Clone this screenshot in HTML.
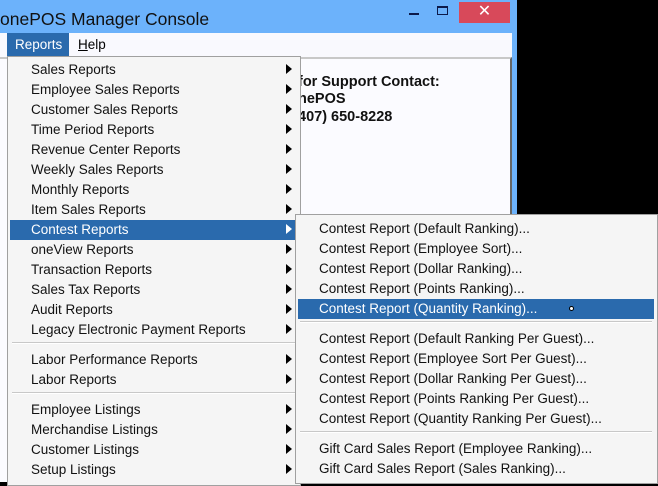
<!DOCTYPE html>
<html><head><style>
*{margin:0;padding:0;box-sizing:border-box}
body{width:658px;height:482px;background:#000;position:relative;overflow:hidden;font-family:"Liberation Sans","DejaVu Sans",sans-serif}
.win{position:absolute;left:0;top:0;width:517px;height:482px;background:#6cb2fb}
.title{position:absolute;left:0;top:9px;font-size:17.5px;color:#111}
.close{position:absolute;left:459px;top:2px;width:51px;height:21px;background:#d8495a;color:#fff;text-align:center;font-size:16px;line-height:20px}
.min{position:absolute;left:409px;top:13px;width:10px;height:2px;background:#0c1a4a}
.max{position:absolute;left:437px;top:6px;width:11px;height:9px;border:1px solid #0c1a4a;border-top-width:2px}
.menubar{position:absolute;left:0;top:33px;width:512px;height:24px;background:#f9f9fe;font-size:13.5px}
.menubar span{position:absolute;top:0;height:23px;line-height:23px}
.client{position:absolute;left:0;top:57px;width:512px;height:425px;background:#fbfbff;border-top:2px solid #c8c8c8;border-right:2px solid #666}
.ct{position:absolute;left:298px;font-weight:bold;font-size:14.5px;color:#111}
.menu{position:absolute;background:#f5f5f5;border:1px solid #a0a0a0;font-size:13.5px;color:#111}
.it{position:absolute;left:2px;height:20px;line-height:19px;white-space:nowrap}
.hl{background:#2a6aad;color:#fff}
.arr{position:absolute;width:0;height:0;border-top:5px solid transparent;border-bottom:5px solid transparent;border-left:6px solid #000;top:4px}
.sep{position:absolute;left:24px;height:2px;border-top:1px solid #c8c8c8;border-bottom:1px solid #fff}
</style></head><body>
<div class="win">
<div class="title">onePOS Manager Console</div>
<div class="min"></div><div class="max"></div>
<div class="close">✕</div>
<div class="menubar">
<span style="left:7px;width:62px;background:#2a6aad;color:#fff;padding-left:8px">Reports</span>
<span style="left:78px"><u>H</u>elp</span>
</div>
<div class="client">
<div class="ct" style="top:15px">for Support Contact:</div>
<div class="ct" style="top:32px">nePOS</div>
<div class="ct" style="top:50px">407) 650-8228</div>
</div>
</div>

<div class="menu" style="left:7px;top:56px;width:294px;height:430px">
<div class="it" style="top:3px;width:288px"><span style="margin-left:21px">Sales Reports</span><i class="arr" style="left:276px"></i></div>
<div class="it" style="top:23px;width:288px"><span style="margin-left:21px">Employee Sales Reports</span><i class="arr" style="left:276px"></i></div>
<div class="it" style="top:43px;width:288px"><span style="margin-left:21px">Customer Sales Reports</span><i class="arr" style="left:276px"></i></div>
<div class="it" style="top:63px;width:288px"><span style="margin-left:21px">Time Period Reports</span><i class="arr" style="left:276px"></i></div>
<div class="it" style="top:83px;width:288px"><span style="margin-left:21px">Revenue Center Reports</span><i class="arr" style="left:276px"></i></div>
<div class="it" style="top:103px;width:288px"><span style="margin-left:21px">Weekly Sales Reports</span><i class="arr" style="left:276px"></i></div>
<div class="it" style="top:123px;width:288px"><span style="margin-left:21px">Monthly Reports</span><i class="arr" style="left:276px"></i></div>
<div class="it" style="top:143px;width:288px"><span style="margin-left:21px">Item Sales Reports</span><i class="arr" style="left:276px"></i></div>
<div class="it hl" style="top:163px;width:288px"><span style="margin-left:21px">Contest Reports</span><i class="arr" style="left:276px;border-left-color:#fff"></i></div>
<div class="it" style="top:183px;width:288px"><span style="margin-left:21px">oneView Reports</span><i class="arr" style="left:276px"></i></div>
<div class="it" style="top:203px;width:288px"><span style="margin-left:21px">Transaction Reports</span><i class="arr" style="left:276px"></i></div>
<div class="it" style="top:223px;width:288px"><span style="margin-left:21px">Sales Tax Reports</span><i class="arr" style="left:276px"></i></div>
<div class="it" style="top:243px;width:288px"><span style="margin-left:21px">Audit Reports</span><i class="arr" style="left:276px"></i></div>
<div class="it" style="top:263px;width:288px"><span style="margin-left:21px">Legacy Electronic Payment Reports</span><i class="arr" style="left:276px"></i></div>
<div class="sep" style="top:285px;left:4px;width:284px"></div>
<div class="it" style="top:293px;width:288px"><span style="margin-left:21px">Labor Performance Reports</span><i class="arr" style="left:276px"></i></div>
<div class="it" style="top:313px;width:288px"><span style="margin-left:21px">Labor Reports</span><i class="arr" style="left:276px"></i></div>
<div class="sep" style="top:335px;left:4px;width:284px"></div>
<div class="it" style="top:343px;width:288px"><span style="margin-left:21px">Employee Listings</span><i class="arr" style="left:276px"></i></div>
<div class="it" style="top:363px;width:288px"><span style="margin-left:21px">Merchandise Listings</span><i class="arr" style="left:276px"></i></div>
<div class="it" style="top:383px;width:288px"><span style="margin-left:21px">Customer Listings</span><i class="arr" style="left:276px"></i></div>
<div class="it" style="top:403px;width:288px"><span style="margin-left:21px">Setup Listings</span><i class="arr" style="left:276px"></i></div>
</div>

<div class="menu" style="left:295px;top:214px;width:363px;height:270px">
<div class="it" style="top:4px;width:356px"><span style="margin-left:21px">Contest Report (Default Ranking)...</span></div>
<div class="it" style="top:24px;width:356px"><span style="margin-left:21px">Contest Report (Employee Sort)...</span></div>
<div class="it" style="top:44px;width:356px"><span style="margin-left:21px">Contest Report (Dollar Ranking)...</span></div>
<div class="it" style="top:64px;width:356px"><span style="margin-left:21px">Contest Report (Points Ranking)...</span></div>
<div class="it hl" style="top:84px;width:356px"><span style="margin-left:21px">Contest Report (Quantity Ranking)...</span><span style="position:absolute;left:271px;top:7px;width:5px;height:5px;border:1px solid #000;border-radius:50%;background:#fff"></span></div>
<div class="sep" style="top:106px;left:4px;width:352px"></div>
<div class="it" style="top:114px;width:356px"><span style="margin-left:21px">Contest Report (Default Ranking Per Guest)...</span></div>
<div class="it" style="top:134px;width:356px"><span style="margin-left:21px">Contest Report (Employee Sort Per Guest)...</span></div>
<div class="it" style="top:154px;width:356px"><span style="margin-left:21px">Contest Report (Dollar Ranking Per Guest)...</span></div>
<div class="it" style="top:174px;width:356px"><span style="margin-left:21px">Contest Report (Points Ranking Per Guest)...</span></div>
<div class="it" style="top:194px;width:356px"><span style="margin-left:21px">Contest Report (Quantity Ranking Per Guest)...</span></div>
<div class="sep" style="top:216px;left:4px;width:352px"></div>
<div class="it" style="top:224px;width:356px"><span style="margin-left:21px">Gift Card Sales Report (Employee Ranking)...</span></div>
<div class="it" style="top:244px;width:356px"><span style="margin-left:21px">Gift Card Sales Report (Sales Ranking)...</span></div>
</div>
</body></html>
